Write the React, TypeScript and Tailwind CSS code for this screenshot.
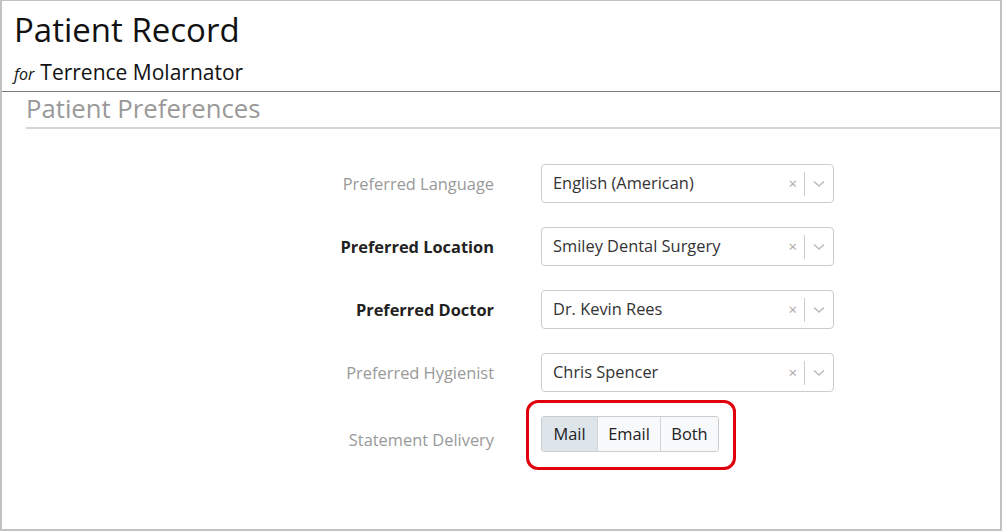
import React from "react";

const font = { fontFamily: '"Open Sans", "Noto Sans", sans-serif' };

function Select({ value }: { value: string }) {
  return (
    <div className="flex h-[39px] w-[293px] items-center rounded-[4px] border border-[#cccccc] bg-white">
      <span className="flex-1 pl-[11px] text-[16.4px] text-[#333333]">{value}</span>
      <span className="mr-[7px] text-[15px] leading-none text-[#aaaaaa]">×</span>
      <span className="h-[24px] w-px bg-[#cccccc]" />
      <span className="flex w-[28px] items-center justify-center">
        <svg width="12" height="8" viewBox="0 0 12 8" fill="none">
          <path d="M1 1.5 L6 6 L11 1.5" stroke="#bbbbbb" strokeWidth="1.6" />
        </svg>
      </span>
    </div>
  );
}

function Row({
  label,
  bold,
  labelClass,
  children,
}: {
  label: string;
  bold?: boolean;
  labelClass?: string;
  children: React.ReactNode;
}) {
  return (
    <div className="flex items-center">
      <div
        className={`w-[492px] text-right text-[16.4px] ${
          bold ? "font-bold text-[#222222]" : "text-[#999999]"
        } ${labelClass ?? ""}`}
      >
        {label}
      </div>
      <div className="ml-[47px]">{children}</div>
    </div>
  );
}

export default function App() {
  return (
    <div style={font} className="h-[532px] w-[1002px] bg-white">
      <div className="flex h-[531px] w-[1002px] flex-col border-t border-b-2 border-l-2 border-r-2 border-[#c2c2c2]">
        <div className="pl-[12px] pt-[9px]">
          <div className="text-[33px] leading-[40px] text-[#111111]">Patient Record</div>
          <div className="mt-[10px] flex items-baseline leading-[24px]">
            <span className="text-[16px] italic text-[#111111]">for</span>
            <span className="ml-[6px] text-[21px] text-[#111111]">Terrence Molarnator</span>
          </div>
        </div>
        <div className="mt-[5px] h-px bg-[#7a7a7a]" />
        <div className="ml-[24px] border-b-2 border-[#d4d4d4] pb-[1px]">
          <div className="text-[25.7px] leading-[34px] text-[#999999]">Patient Preferences</div>
        </div>
        <div className="mt-[35px] flex flex-col gap-[24px]">
          <Row label="Preferred Language" labelClass="pt-[1px]">
            <Select value="English (American)" />
          </Row>
          <Row label="Preferred Location" bold labelClass="pt-[1px]">
            <Select value="Smiley Dental Surgery" />
          </Row>
          <Row label="Preferred Doctor" bold labelClass="pt-[1px]">
            <Select value="Dr. Kevin Rees" />
          </Row>
          <Row label="Preferred Hygienist" labelClass="pt-[1px]">
            <Select value="Chris Spencer" />
          </Row>
          <Row label="Statement Delivery" labelClass="pt-[12px]">
            <div className="relative">
              <div className="flex h-[36px] overflow-hidden rounded-[3px] border border-[#cccccc] text-[16.4px] text-[#222222]">
                <div className="flex w-[55px] items-center justify-center bg-[#dde4ea]">Mail</div>
                <div className="flex w-[63px] items-center justify-center border-l border-[#d4d4d4] bg-[#f8f9fa]">Email</div>
                <div className="flex w-[58px] items-center justify-center border-l border-[#d4d4d4] bg-[#f8f9fa]">Both</div>
              </div>
              <div className="pointer-events-none absolute -bottom-[18px] -left-[15px] -right-[17px] -top-[16px] rounded-[12px] border-[3px] border-[#e0000b]" />
            </div>
          </Row>
        </div>
      </div>
    </div>
  );
}
